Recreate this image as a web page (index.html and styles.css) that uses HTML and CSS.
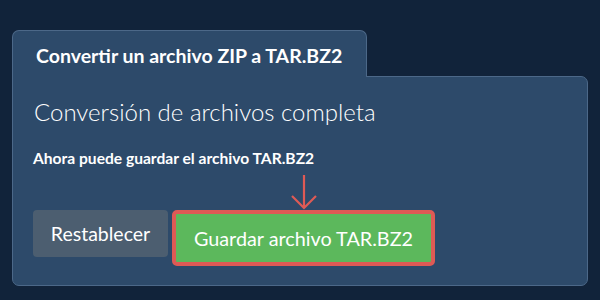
FILE: index.html
```html
<!DOCTYPE html>
<html lang="es">
    <head>
        <meta charset="UTF-8">
        <meta name="viewport" content="width=device-width, initial-scale=1.0">
        <title>Convertir un archivo ZIP a TAR.BZ2</title>
        <link rel="stylesheet" href="styles.css">
    </head>
    <body>
        <div class="converter">
            <div class="tab">Convertir un archivo ZIP a TAR.BZ2</div>
            <div class="panel">
                <h2 class="status">Conversión de archivos completa</h2>
                <p class="note">Ahora puede guardar el archivo TAR.BZ2</p>
                <div class="actions">
                    <button class="button reset-btn">Restablecer</button>
                    <div class="save-wrap">
                        <svg class="arrow" width="30" height="36" viewBox="0 0 30 36">
                            <path d="M15 1 V34 M3 22 L15 34 L27 22" fill="none" stroke="#de5a55" stroke-width="2.2"/>
                        </svg>
                        <button class="button save-btn">Guardar archivo TAR.BZ2</button>
                    </div>
                </div>
            </div>
        </div>
    </body>
</html>
```

FILE: styles.css
```css
body {
    margin: 0;
    background-color: #11233a;
    font-family: Lato, "Open Sans", sans-serif;
    color: #fff;
}
.converter {
    padding: 30px 12px 13px 12px;
}
.tab {
    display: inline-block;
    box-sizing: border-box;
    width: 355px;
    height: 47px;
    padding: 13px 0 0 23px;
    background-color: #2d4a6a;
    border: 1px solid #4c6888;
    border-bottom: none;
    border-radius: 7px 7px 0 0;
    font-size: 19.5px;
    font-weight: bold;
    position: relative;
    z-index: 1;
    margin-bottom: -1px;
}
.panel {
    height: 210px;
    box-sizing: border-box;
    background-color: #2d4a6a;
    border: 1px solid #4c6888;
    border-radius: 0 7px 7px 7px;
    padding: 20px 20px 0 20px;
}
.status {
    margin: 0 0 0 1px;
    font-size: 24px;
    font-weight: 300;
    line-height: 30px;
}
.note {
    margin: 22px 0 0 0;
    font-size: 15.6px;
    font-weight: bold;
    line-height: 18px;
}
.actions {
    display: flex;
    align-items: flex-start;
    gap: 4px;
    margin-top: 7px;
}
.button {
    font-family: inherit;
    color: #fff;
    border: none;
    cursor: pointer;
}
.reset-btn {
    margin-top: 36px;
    width: 135px;
    height: 47px;
    background-color: #4c5e70;
    border-radius: 4px;
    font-size: 19.5px;
    padding: 0;
}
.save-wrap {
    display: flex;
    flex-direction: column;
    align-items: center;
}
.arrow {
    display: block;
}
.save-btn {
    box-sizing: border-box;
    width: 263px;
    height: 56px;
    background-color: #5cb85c;
    border: 4px solid #de5a55;
    border-radius: 5px;
    font-size: 19.8px;
    padding: 0;
}
```
